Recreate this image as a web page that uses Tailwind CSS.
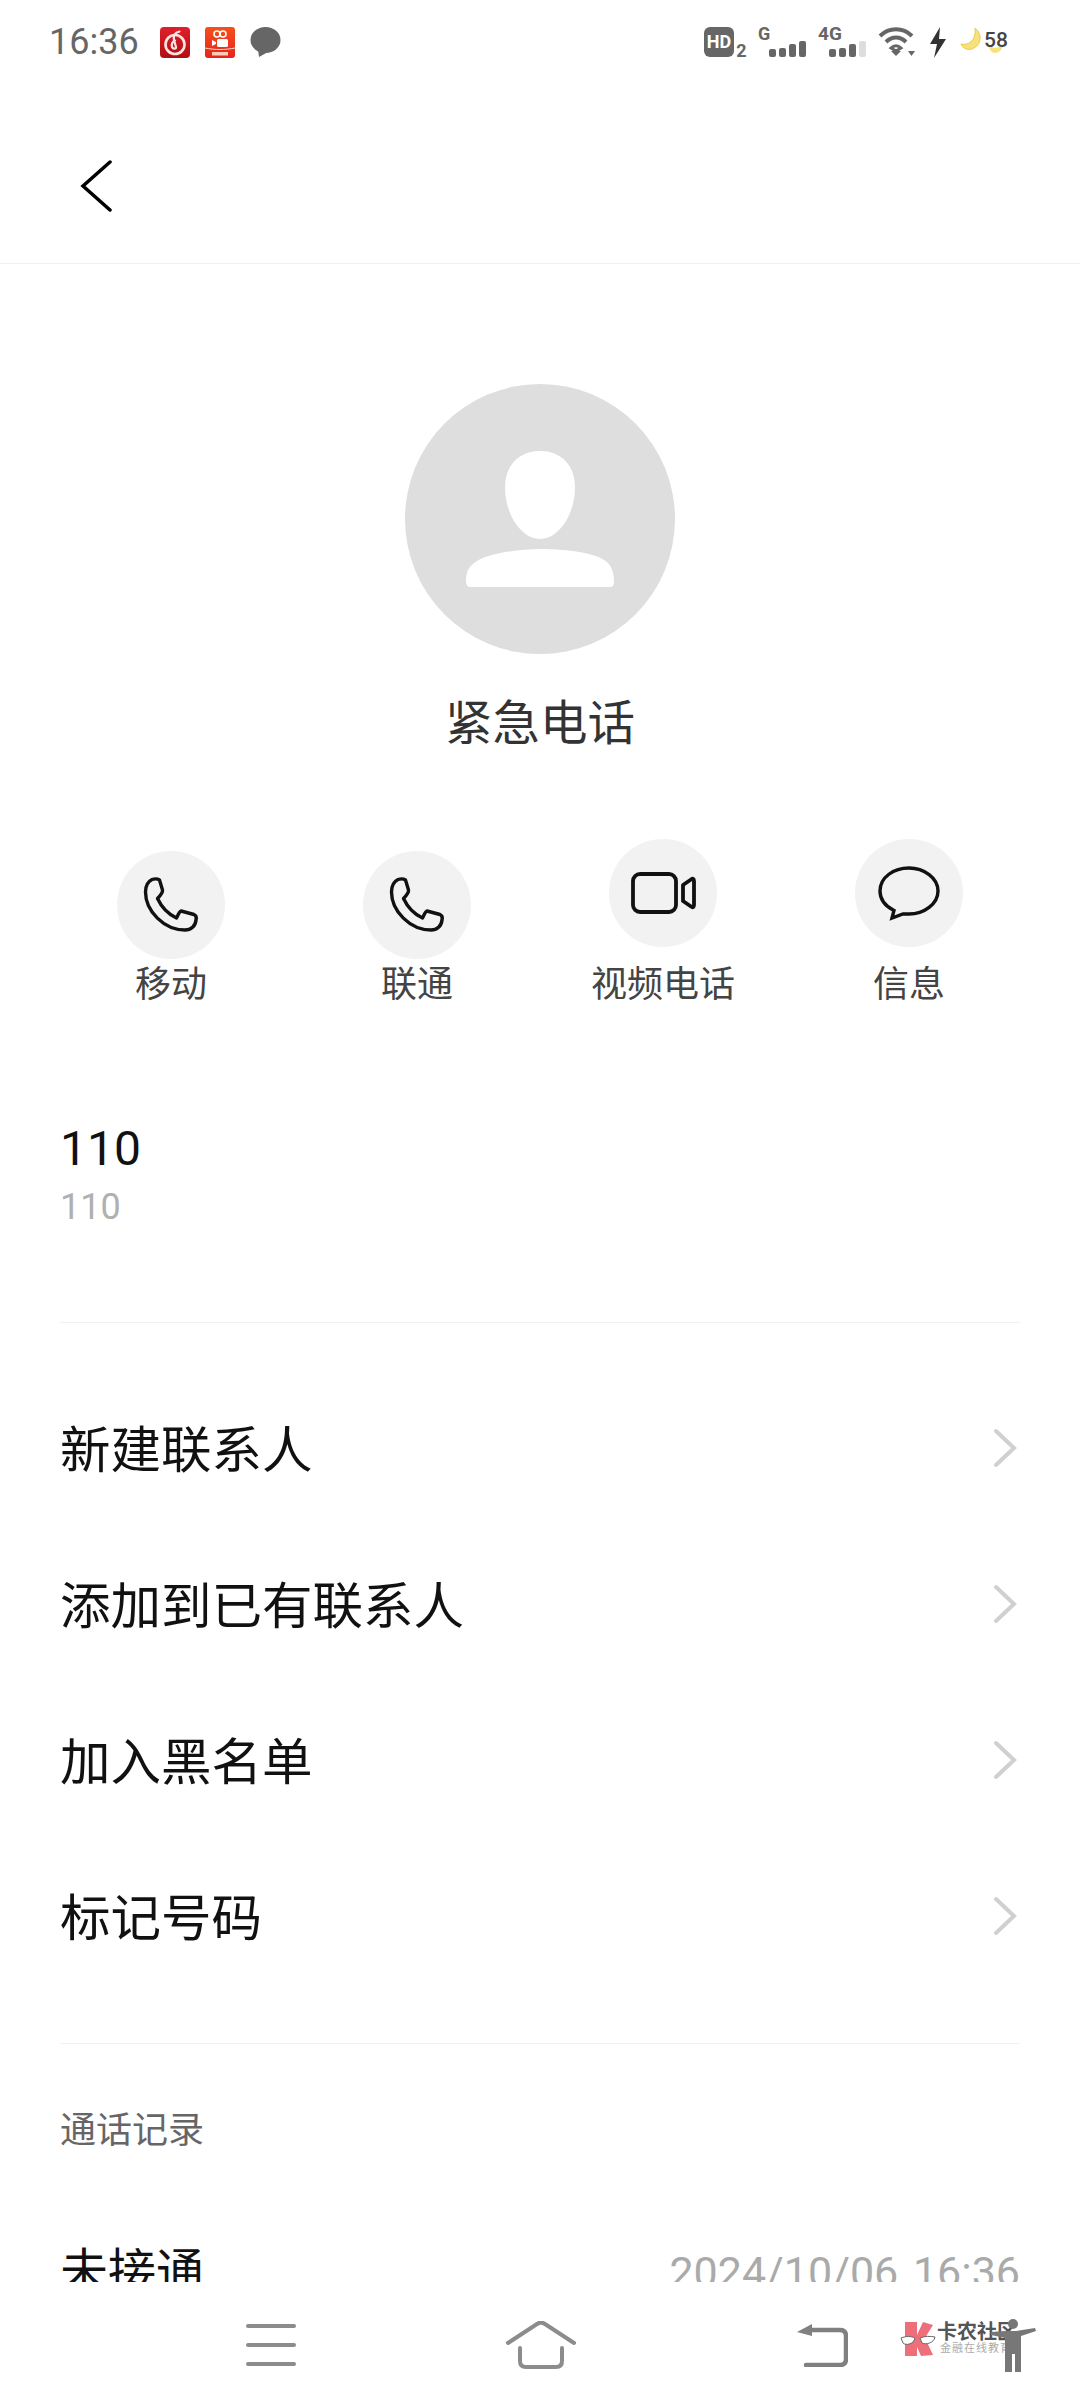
<!DOCTYPE html>
<html lang="zh-CN">
<head>
  <meta charset="UTF-8" />
  <meta name="viewport" content="width=device-width, initial-scale=1.0" />
  <title>紧急电话</title>
  <script src="https://cdn.jsdelivr.net/npm/@tailwindcss/browser@4"></script>
</head>
<body class="bg-white">
  <div class="relative flex flex-col w-[1080px] h-[2408px] overflow-hidden bg-white font-['Roboto','Noto_Sans_CJK_SC',sans-serif]">

    <!-- status bar -->
    <div class="h-[84px] shrink-0 flex items-center pl-[49px] text-[#666666]">
      <span class="text-[36px] leading-[36px] w-[111px]">16:36</span>
      <svg class="w-[30px] h-[31px]" viewBox="0 0 30 31">
        <defs>
          <linearGradient id="redApp" x1="0" y1="0" x2="0" y2="1"><stop offset="0" stop-color="#e0202a" /><stop offset="1" stop-color="#b00d12" /></linearGradient>
          <linearGradient id="orangeApp" x1="0" y1="0" x2="0" y2="1"><stop offset="0" stop-color="#f5501a" /><stop offset="1" stop-color="#e5231f" /></linearGradient>
        </defs>
        <rect width="30" height="31" rx="4" fill="url(#redApp)" />
        <circle cx="15" cy="17.5" r="9.5" fill="none" stroke="#ffe3e3" stroke-width="2.6" />
        <path d="M19.5 4.5 C14.5 5.5 13 9 14 13 L16 20 C16.5 22 13 22.5 12 20 C11 17 13 14 15 13.5" fill="none" stroke="#ffe3e3" stroke-width="2.2" stroke-linecap="round" />
      </svg>
      <svg class="w-[30px] h-[31px] ml-[15px]" viewBox="0 0 30 31">
        <rect width="30" height="31" rx="3" fill="url(#orangeApp)" />
        <circle cx="12" cy="7" r="3" fill="none" stroke="#fff" stroke-width="1.6" />
        <circle cx="18" cy="7" r="3" fill="none" stroke="#fff" stroke-width="1.6" />
        <rect x="12" y="12" width="11" height="8" rx="1.5" fill="#fff" />
        <path d="M7 13 L11 15 V17 L7 19 Z" fill="#fff" />
        <path d="M0 21 C10 23 20 23 30 21" fill="none" stroke="#ffd9c4" stroke-width="1" />
        <rect x="7" y="25" width="16" height="3.5" fill="#ffe9d0" opacity="0.85" />
      </svg>
      <svg class="w-[31px] h-[30px] ml-[15px]" viewBox="0 0 31 30">
        <ellipse cx="15.5" cy="13" rx="15" ry="13" fill="#666666" />
        <path d="M8 22 L9 30 L18 25 Z" fill="#666666" />
      </svg>

      <div class="relative ml-[423px] w-[30px] h-[30px] rounded-[6px] bg-[#666666] text-white text-[18px] leading-[30px] font-bold text-center">HD</div>
      <span class="self-end mb-[26px] w-[15px] text-[18px] leading-[14px] font-bold text-center">2</span>
      <div class="relative ml-[9px] w-[47px] h-[30px]">
        <span class="absolute left-0 top-[-1px] text-[18px] leading-[16px] font-bold">G</span>
        <div class="absolute left-[11px] bottom-0 flex items-end gap-[3px]">
          <div class="w-[7px] h-[8px] rounded-[2px] bg-[#666666]"></div>
          <div class="w-[7px] h-[9px] rounded-[2px] bg-[#666666]"></div>
          <div class="w-[7px] h-[13px] rounded-[2px] bg-[#666666]"></div>
          <div class="w-[7px] h-[16px] rounded-[2px] bg-[#666666]"></div>
        </div>
      </div>
      <div class="relative ml-[13px] w-[47px] h-[30px]">
        <span class="absolute left-0 top-[-1px] text-[19px] leading-[16px] font-bold">4G</span>
        <div class="absolute left-[11px] bottom-0 flex items-end gap-[3px]">
          <div class="w-[7px] h-[8px] rounded-[2px] bg-[#666666]"></div>
          <div class="w-[7px] h-[9px] rounded-[2px] bg-[#666666]"></div>
          <div class="w-[7px] h-[13px] rounded-[2px] bg-[#666666]"></div>
          <div class="w-[7px] h-[16px] rounded-[2px] bg-[#dddddd]"></div>
        </div>
      </div>
      <svg class="w-[37px] h-[30px] ml-[13px]" viewBox="0 0 37 30">
        <path d="M2 9 C11 0 25 0 34 9" fill="none" stroke="#666666" stroke-width="4" />
        <path d="M8 15 C14 9 22 9 28 15" fill="none" stroke="#666666" stroke-width="4" />
        <path d="M13 21 C16 18 20 18 23 21 L18 24 Z" fill="none" stroke="#666666" stroke-width="3" />
        <path d="M13 24 H23 L18 29 Z" fill="#666666" />
        <path d="M30 24 H37 L33.5 29 Z" fill="#666666" />
      </svg>
      <svg class="w-[18px] h-[31px] ml-[14px]" viewBox="0 0 18 31">
        <path d="M11 0 L1 17 H8 L5 31 L17 12 H10 Z" fill="#333333" />
      </svg>
      <div class="relative ml-[13px] w-[46px] h-[30px]">
        <svg class="absolute left-0 top-0 w-[23px] h-[24px]" viewBox="0 0 23 24">
          <path d="M15 1 C22 6 22 17 14 21 C9 24 3 22 1 17 C7 19 17 14 15 1 Z" fill="#f6e27a" stroke="#eccb45" stroke-width="1" />
        </svg>
        <svg class="absolute left-[27px] top-[14px] w-[18px] h-[12px]" viewBox="0 0 18 12">
          <path d="M1 1 C3 8 12 9 17 2 C16 9 11 12 8 12 C4 12 1 7 1 1 Z" fill="#f6e27a" />
        </svg>
        <span class="absolute left-[24px] top-[3px] text-[21px] leading-[21px] font-medium text-[#444444]">58</span>
      </div>
    </div>

    <!-- toolbar -->
    <div class="h-[180px] shrink-0 border-b border-[#f2f2f2] pl-[80px] pt-[76px]">
      <svg class="w-[32px] h-[52px]" viewBox="0 0 32 52">
        <path d="M30 2 L3 26 L30 50" fill="none" stroke="#000000" stroke-width="3.5" stroke-linecap="round" />
      </svg>
    </div>

    <main class="flex-1 min-h-0 overflow-hidden">
      <!-- avatar and name -->
      <div class="flex flex-col items-center pt-[120px]">
        <div class="w-[270px] h-[270px] rounded-full bg-[#dedede] flex items-center justify-center">
          <svg class="w-[270px] h-[270px]" viewBox="0 0 270 270">
            <path d="M135 67 C155 67 170 80 170 104 C170 128 155 155 135 155 C115 155 100 128 100 104 C100 80 115 67 135 67 Z" fill="#ffffff" />
            <path d="M135 165 C158 165 190 168 202 178 C208 184 209 191 209 198 C209 202 207 203 205 203 H65 C63 203 61 201 61 198 C61 190 62 183 72 177 C85 169 115 165 135 165 Z" fill="#ffffff" />
          </svg>
        </div>
        <h1 class="mt-[40px] text-[47.5px] leading-[60px] font-normal text-[#333333]">紧急电话</h1>
      </div>

      <!-- actions -->
      <div class="grid grid-cols-4 px-[48px] mt-[85px] text-[36px] leading-[52px] text-[#444444]">
        <div class="flex flex-col items-center">
          <div class="mt-[12px] w-[108px] h-[108px] rounded-full bg-[#f2f2f2]">
            <svg class="w-[108px] h-[108px]" viewBox="0 0 108 108">
              <path transform="translate(27 27)" d="M8 1.5 C11 .5 14 1 15.5 2 L18.5 12 C18.8 14 16 18 13.5 20.5 C17 28 24 36 32.5 40 C34 37 35 34 37 33 L50 36.5 C52.5 37.5 52.5 40 52 42 C51.5 48 47 52 41 52 C20 52 1.5 33 1.5 14 C1.5 8 4 3.5 8 1.5 Z" fill="none" stroke="#111111" stroke-width="3.4" stroke-linejoin="round" />
            </svg>
          </div>
          <span>移动</span>
        </div>
        <div class="flex flex-col items-center">
          <div class="mt-[12px] w-[108px] h-[108px] rounded-full bg-[#f2f2f2]">
            <svg class="w-[108px] h-[108px]" viewBox="0 0 108 108">
              <path transform="translate(27 27)" d="M8 1.5 C11 .5 14 1 15.5 2 L18.5 12 C18.8 14 16 18 13.5 20.5 C17 28 24 36 32.5 40 C34 37 35 34 37 33 L50 36.5 C52.5 37.5 52.5 40 52 42 C51.5 48 47 52 41 52 C20 52 1.5 33 1.5 14 C1.5 8 4 3.5 8 1.5 Z" fill="none" stroke="#111111" stroke-width="3.4" stroke-linejoin="round" />
            </svg>
          </div>
          <span>联通</span>
        </div>
        <div class="flex flex-col items-center">
          <div class="mb-[12px] w-[108px] h-[108px] rounded-full bg-[#f2f2f2]">
            <svg class="w-[108px] h-[108px]" viewBox="0 0 108 108">
              <rect x="24" y="35" width="43" height="38" rx="7" fill="none" stroke="#111111" stroke-width="3.8" />
              <path d="M74 46 L82 40.5 C84 39 85 40 85 42 V66 C85 68 84 69 82 67.5 L74 62 Z" fill="none" stroke="#111111" stroke-width="3.8" stroke-linejoin="round" />
            </svg>
          </div>
          <span>视频电话</span>
        </div>
        <div class="flex flex-col items-center">
          <div class="mb-[12px] w-[108px] h-[108px] rounded-full bg-[#f2f2f2]">
            <svg class="w-[108px] h-[108px]" viewBox="0 0 108 108">
              <path d="M39 71.5 C30 67 25 60 25 52 C25 38 39 29 54 29 C69 29 83 39 83 52 C83 65 69 75 54 75 C52 75 50 75 48 75 L37 79 Z" fill="none" stroke="#111111" stroke-width="3.4" stroke-linejoin="miter" />
            </svg>
          </div>
          <span>信息</span>
        </div>
      </div>

      <!-- number -->
      <div class="px-[60px] mt-[108px]">
        <div class="text-[48px] leading-[60px] text-[#111111]">110</div>
        <div class="mt-[3px] text-[36px] leading-[50px] text-[#b0b0b0]">110</div>
      </div>
      <div class="mx-[60px] mt-[90px] h-px bg-[#f2f2f2]"></div>

      <!-- menu -->
      <div class="mt-[47px] px-[60px] text-[50.5px] text-[#111111]">
        <div class="h-[156px] flex items-center justify-between">
          <span class="mt-[6px]">新建联系人</span>
          <svg class="w-[24px] h-[40px] mr-[3px]" viewBox="0 0 24 40"><path d="M3 3 L21 20 L3 37" fill="none" stroke="#d0d0d0" stroke-width="4" stroke-linecap="round" /></svg>
        </div>
        <div class="h-[156px] flex items-center justify-between">
          <span class="mt-[6px]">添加到已有联系人</span>
          <svg class="w-[24px] h-[40px] mr-[3px]" viewBox="0 0 24 40"><path d="M3 3 L21 20 L3 37" fill="none" stroke="#d0d0d0" stroke-width="4" stroke-linecap="round" /></svg>
        </div>
        <div class="h-[156px] flex items-center justify-between">
          <span class="mt-[6px]">加入黑名单</span>
          <svg class="w-[24px] h-[40px] mr-[3px]" viewBox="0 0 24 40"><path d="M3 3 L21 20 L3 37" fill="none" stroke="#d0d0d0" stroke-width="4" stroke-linecap="round" /></svg>
        </div>
        <div class="h-[156px] flex items-center justify-between">
          <span class="mt-[6px]">标记号码</span>
          <svg class="w-[24px] h-[40px] mr-[3px]" viewBox="0 0 24 40"><path d="M3 3 L21 20 L3 37" fill="none" stroke="#d0d0d0" stroke-width="4" stroke-linecap="round" /></svg>
        </div>
      </div>
      <div class="mx-[60px] mt-[49px] h-px bg-[#f2f2f2]"></div>

      <!-- call log -->
      <div class="px-[60px] mt-[62px] text-[36px] leading-[50px] text-[#666666]">通话记录</div>
      <div class="px-[60px] mt-[86px] flex items-center justify-between">
        <span class="text-[48px] leading-[60px] text-[#111111]">未接通</span>
        <span class="text-[43px] leading-[60px] text-[#aaaaaa] [word-spacing:4px]">2024/10/06 16:36</span>
      </div>
    </main>

    <!-- nav bar -->
    <nav class="h-[126px] shrink-0 flex items-center pl-[246px] bg-white">
      <div class="w-[50px] flex flex-col gap-[15px]">
        <div class="h-[4px] rounded-full bg-[#8c8c8c]"></div>
        <div class="h-[4px] rounded-full bg-[#8c8c8c]"></div>
        <div class="h-[4px] rounded-full bg-[#8c8c8c]"></div>
      </div>
      <svg class="ml-[210px] w-[70px] h-[48px]" viewBox="0 0 70 48">
        <path d="M2 22 L31 3 C34 1 36 1 39 3 L68 22" fill="none" stroke="#8c8c8c" stroke-width="4" stroke-linecap="round" />
        <path d="M14 27 V40 C14 44 16 46 20 46 H50 C54 46 56 44 56 40 V27" fill="none" stroke="#8c8c8c" stroke-width="4" stroke-linecap="round" />
      </svg>
      <svg class="ml-[220px] w-[52px] h-[44px]" viewBox="0 0 52 44">
        <path d="M16 1 L1 9 L16 13 Z" fill="#808080" />
        <path d="M14 7 H44 C48 7 50 9 50 13 V36 C50 40 48 42 44 42 H10" fill="none" stroke="#808080" stroke-width="4.5" stroke-linecap="round" />
      </svg>
    </nav>

    <!-- watermark over the nav bar -->
    <div class="absolute left-[900px] top-[2318px] w-[140px] h-[58px]">
      <svg class="absolute left-0 top-[3px] w-[36px] h-[36px]" viewBox="0 0 36 36">
        <path d="M5 1 H17 V14 L23 1 L33 4 L25 17 L33 34 L21 35 L17 26 V35 H5 Z" fill="#ee6f7a" />
        <path d="M1 17 C6 15 11 15 15 17 C14 23 6 25 3 22 Z M20 17 C25 15 30 15 35 16 C34 22 26 24 22 22 Z" fill="#ffffff" stroke="#666666" stroke-width="1" />
      </svg>
      <span class="absolute left-[37px] top-[3px] text-[20px] leading-[22px] font-bold text-[#555555] whitespace-nowrap">卡农社区</span>
      <span class="absolute left-[40px] top-[24px] text-[11px] leading-[14px] tracking-[1px] text-[#aaaaaa] whitespace-nowrap">金融在线教育</span>
      <svg class="absolute left-[90px] top-0 w-[48px] h-[56px]" viewBox="0 0 48 56">
        <circle cx="23" cy="6" r="5" fill="#777777" />
        <path d="M15 13 H26 L45 10 L46 13 L31 18 V54 H25 V36 H22 V54 H15 V20 L1 17 L1 14 Z" fill="#777777" />
      </svg>
    </div>
  </div>
</body>
</html>
